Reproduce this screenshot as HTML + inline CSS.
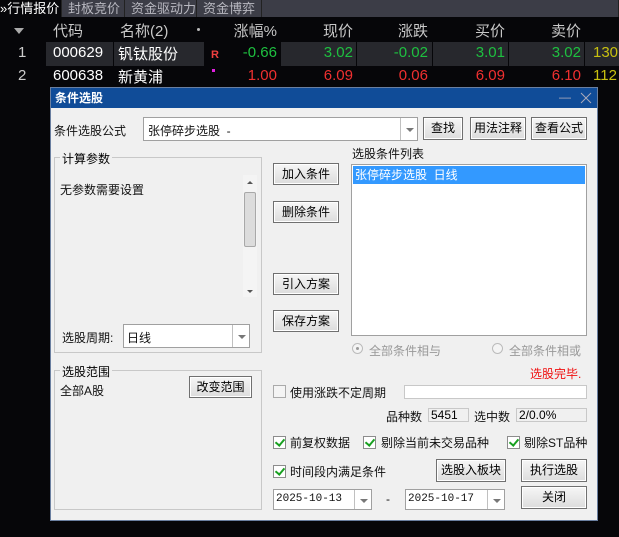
<!DOCTYPE html><html><head><meta charset="utf-8"><style>
*{margin:0;padding:0;box-sizing:border-box}
body{width:619px;height:537px;background:#060609;position:relative;overflow:hidden;font-family:"Liberation Sans","Noto Sans CJK SC",sans-serif;font-size:12px}
.a{position:absolute;white-space:nowrap}
.tab{position:absolute;top:0;height:17px;background:#3c3d47;color:#b8b8c0;font-size:13px;line-height:17px;padding-left:6px;border-right:1px solid #222}
.h{color:#c8c8c8;font-size:15px;top:20px}
.r{font-size:15px}
.cell{position:absolute;background:#27282d}
.g{color:#1ec040}.rd{color:#f03030}.y{color:#c8c010}
.dlg{position:absolute;left:50px;top:87px;width:548px;height:434px;background:#f0f0f0;border:1px solid #6a7fa0}
.tb{position:absolute;left:0;top:0;width:100%;height:20px;background:#104c98;color:#fff;font-weight:bold;font-size:12px;line-height:20px;padding-left:4px}
.btn{position:absolute;border:1px solid #707070;background:linear-gradient(#f6f6f6,#dcdcdc);text-align:center;font-size:12px;color:#000;box-shadow:inset 0 0 0 1px #fff}
.box{position:absolute;background:#fff;border:1px solid #a0a0a0}
.ro{position:absolute;background:#f0f0f0;border:1px solid #c8c8c8;font-size:12px;line-height:13px;padding-left:2px}
.dd{position:absolute;top:0;right:0;width:17px;height:100%;border-left:1px solid #c0c0c0}
.dd:after{content:"";position:absolute;left:5px;top:45%;border:4px solid transparent;border-top:4px solid #777;border-bottom:0}
.grp{position:absolute;border:1px solid #c8c8c8}
.gl{position:absolute;background:#f0f0f0;padding:0 2px;top:-8px;left:5px;font-size:12px}
.cb{position:absolute;width:13px;height:13px;border:1px solid #8c8c8c;background:#fff}
.cb.on:after{content:"";position:absolute;left:3px;top:0px;width:4px;height:7px;border:solid #18a020;border-width:0 2px 2px 0;transform:rotate(40deg)}
.t{position:absolute;white-space:nowrap;font-size:12px;color:#111}
</style></head><body>
<div class="tab" style="left:0;width:62px;background:#060609;color:#fff;padding-left:0">»行情报价</div>
<div class="tab" style="left:62px;width:63px">封板竞价</div>
<div class="tab" style="left:125px;width:72px">资金驱动力</div>
<div class="tab" style="left:197px;width:65px">资金博弈</div>
<div class="tab" style="left:262px;width:357px"></div>

<div class="a" style="left:14px;top:28px;border:5px solid transparent;border-top:6px solid #aaa"></div>
<div class="a h" style="left:53px">代码</div>
<div class="a h" style="left:120px">名称(2)</div>
<div class="a" style="left:197px;top:28px;width:3px;height:3px;border-radius:50%;background:#bbb"></div>
<div class="a h" style="right:342px">涨幅%</div>
<div class="a h" style="right:266px">现价</div>
<div class="a h" style="right:191px">涨跌</div>
<div class="a h" style="right:114px">买价</div>
<div class="a h" style="right:38px">卖价</div>

<div class="cell" style="left:46px;top:42px;width:67px;height:24px"></div>
<div class="cell" style="left:114px;top:42px;width:90px;height:24px"></div>
<div class="cell" style="left:281px;top:42px;width:75px;height:24px"></div>
<div class="cell" style="left:357px;top:42px;width:75px;height:24px"></div>
<div class="cell" style="left:433px;top:42px;width:75px;height:24px"></div>
<div class="cell" style="left:509px;top:42px;width:75px;height:24px"></div>
<div class="cell" style="left:585px;top:42px;width:34px;height:24px"></div>

<div class="a r" style="left:18px;top:44px;color:#ccc">1</div>
<div class="a r" style="left:53px;top:44px;color:#fff">000629</div>
<div class="a r" style="left:118px;top:43px;color:#fff">钒钛股份</div>
<div class="a" style="left:211px;top:49px;color:#f04040;font-weight:bold;font-size:11px">R</div>
<div class="a r g" style="right:342px;top:44px">-0.66</div>
<div class="a r g" style="right:266px;top:44px">3.02</div>
<div class="a r g" style="right:191px;top:44px">-0.02</div>
<div class="a r g" style="right:114px;top:44px">3.01</div>
<div class="a r g" style="right:38px;top:44px">3.02</div>
<div class="a r y" style="left:593px;top:44px">130</div>

<div class="a r" style="left:18px;top:67px;color:#ccc">2</div>
<div class="a r" style="left:53px;top:67px;color:#fff">600638</div>
<div class="a r" style="left:118px;top:66px;color:#fff">新黄浦</div>
<div class="a" style="left:212px;top:69px;width:3px;height:3px;background:#e020e0"></div>
<div class="a r rd" style="right:342px;top:67px">1.00</div>
<div class="a r rd" style="right:266px;top:67px">6.09</div>
<div class="a r rd" style="right:191px;top:67px">0.06</div>
<div class="a r rd" style="right:114px;top:67px">6.09</div>
<div class="a r rd" style="right:38px;top:67px">6.10</div>
<div class="a r y" style="left:593px;top:67px">112</div>

<div class="dlg"><div class="tb">条件选股<span style="position:absolute;right:26px;top:-1px;font-weight:normal;color:#aab">—</span><svg style="position:absolute;right:5px;top:4px" width="12" height="12"><path d="M1 1L11 11M11 1L1 11" stroke="#aab" stroke-width="1"/></svg></div></div>

<div class="t" style="left:54px;top:122px">条件选股公式</div>
<div class="box" style="left:143px;top:117px;width:275px;height:24px"><span class="t" style="left:4px;top:4px">张停碎步选股&nbsp;&nbsp;-</span><div class="dd"></div></div>
<div class="btn" style="left:423px;top:117px;width:40px;height:23px;line-height:21px">查找</div>
<div class="btn" style="left:470px;top:117px;width:56px;height:23px;line-height:21px">用法注释</div>
<div class="btn" style="left:531px;top:117px;width:56px;height:23px;line-height:21px">查看公式</div>

<div class="grp" style="left:54px;top:157px;width:208px;height:196px"><span class="gl">计算参数</span></div>
<div class="t" style="left:60px;top:181px">无参数需要设置</div>
<div class="a" style="left:243px;top:175px;width:14px;height:122px;background:#f4f4f4"></div>
<div class="a" style="left:247px;top:181px;border:3px solid transparent;border-bottom:3px solid #555;border-top:0"></div>
<div class="a" style="left:247px;top:290px;border:3px solid transparent;border-top:3px solid #555;border-bottom:0"></div>
<div class="a" style="left:244px;top:192px;width:12px;height:55px;background:#dcdcdc;border:1px solid #a8a8a8;border-radius:2px"></div>
<div class="t" style="left:62px;top:329px">选股周期:</div>
<div class="box" style="left:123px;top:324px;width:127px;height:24px"><span class="t" style="left:3px;top:4px">日线</span><div class="dd"></div></div>

<div class="btn" style="left:273px;top:163px;width:66px;height:22px;line-height:20px">加入条件</div>
<div class="btn" style="left:273px;top:201px;width:66px;height:22px;line-height:20px">删除条件</div>
<div class="btn" style="left:273px;top:273px;width:66px;height:22px;line-height:20px">引入方案</div>
<div class="btn" style="left:273px;top:310px;width:66px;height:22px;line-height:20px">保存方案</div>

<div class="t" style="left:352px;top:145px">选股条件列表</div>
<div class="box" style="left:351px;top:164px;width:236px;height:172px"></div>
<div class="a" style="left:353px;top:166px;width:232px;height:18px;background:#3399ff;color:#fff;font-size:12px;line-height:18px;padding-left:2px">张停碎步选股&nbsp;&nbsp;日线</div>

<div class="a" style="left:352px;top:343px;width:11px;height:11px;border-radius:50%;border:1px solid #bbb;background:#f4f4f4"><div style="position:absolute;left:3px;top:3px;width:3px;height:3px;border-radius:50%;background:#999"></div></div>
<div class="t" style="left:369px;top:342px;color:#999">全部条件相与</div>
<div class="a" style="left:492px;top:343px;width:11px;height:11px;border-radius:50%;border:1px solid #bbb;background:#f4f4f4"></div>
<div class="t" style="left:509px;top:342px;color:#999">全部条件相或</div>
<div class="t" style="left:530px;top:365px;color:#f01010">选股完毕.</div>

<div class="grp" style="left:54px;top:370px;width:208px;height:140px"><span class="gl">选股范围</span></div>
<div class="t" style="left:60px;top:382px">全部A股</div>
<div class="btn" style="left:189px;top:376px;width:63px;height:22px;line-height:20px">改变范围</div>

<div class="cb" style="left:273px;top:385px;background:#f4f4f4;border-color:#aaa"></div>
<div class="t" style="left:290px;top:384px">使用涨跌不定周期</div>
<div class="box" style="left:404px;top:385px;width:183px;height:14px;border-color:#c8c8c8"></div>
<div class="t" style="left:386px;top:408px">品种数</div>
<div class="ro" style="left:428px;top:408px;width:41px;height:14px">5451</div>
<div class="t" style="left:474px;top:408px">选中数</div>
<div class="ro" style="left:516px;top:408px;width:71px;height:14px">2/0.0%</div>

<div class="cb on" style="left:273px;top:436px"></div><div class="t" style="left:290px;top:434px">前复权数据</div>
<div class="cb on" style="left:363px;top:436px"></div><div class="t" style="left:381px;top:434px">剔除当前未交易品种</div>
<div class="cb on" style="left:507px;top:436px"></div><div class="t" style="left:524px;top:434px">剔除ST品种</div>
<div class="cb on" style="left:273px;top:465px"></div><div class="t" style="left:290px;top:463px">时间段内满足条件</div>
<div class="btn" style="left:436px;top:459px;width:70px;height:23px;line-height:21px">选股入板块</div>
<div class="btn" style="left:521px;top:459px;width:66px;height:23px;line-height:21px">执行选股</div>

<div class="box" style="left:273px;top:489px;width:99px;height:21px"><span class="t" style="left:2px;top:3px;font-family:'Liberation Mono',monospace;font-size:11px">2025-10-13</span><div class="dd"></div></div>
<div class="t" style="left:386px;top:492px">-</div>
<div class="box" style="left:405px;top:489px;width:100px;height:21px"><span class="t" style="left:2px;top:3px;font-family:'Liberation Mono',monospace;font-size:11px">2025-10-17</span><div class="dd"></div></div>
<div class="btn" style="left:521px;top:486px;width:66px;height:23px;line-height:21px">关闭</div>
</body></html>
